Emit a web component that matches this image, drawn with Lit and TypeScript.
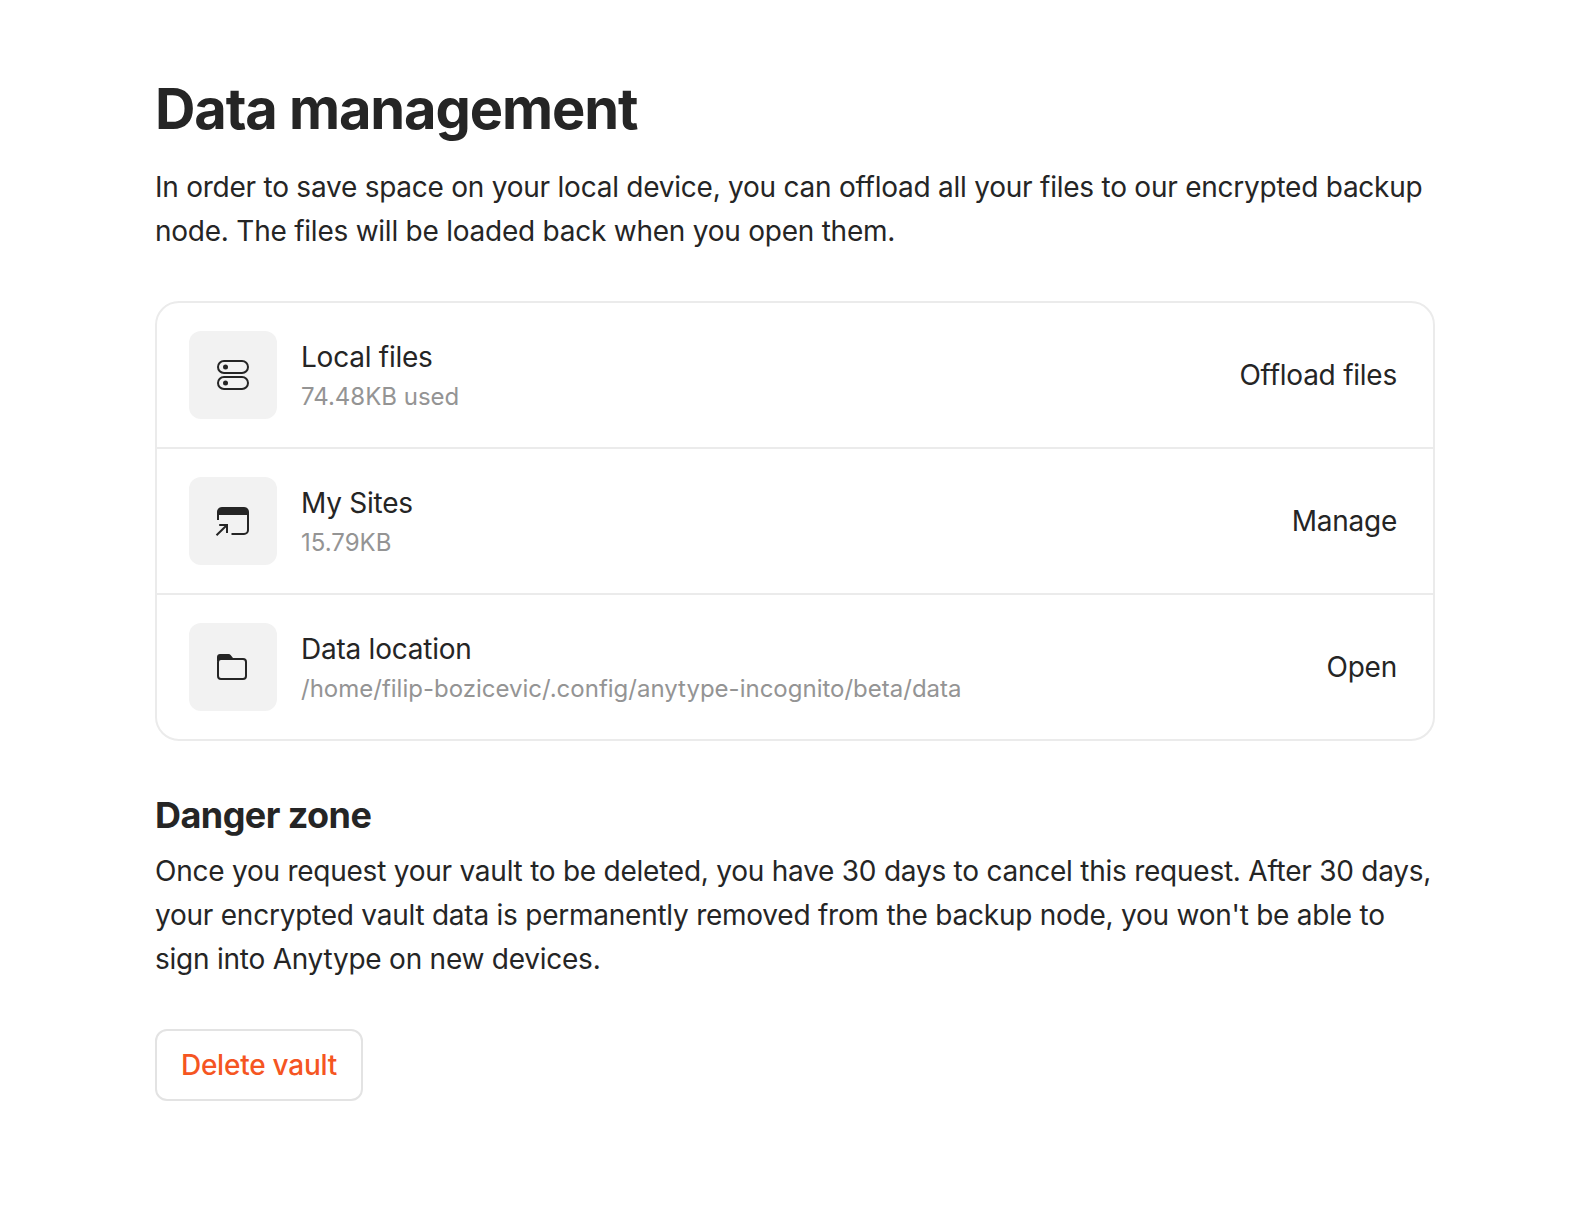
import { LitElement, html, css, svg } from "lit";
import { customElement } from "lit/decorators.js";

const serverIcon = svg`
  <g fill="none" stroke="#252525" stroke-width="2">
    <rect x="5" y="6" width="30" height="12" rx="6"/>
    <rect x="5" y="22" width="30" height="12" rx="6"/>
  </g>
  <circle cx="12.5" cy="12" r="2.5" fill="#252525"/>
  <circle cx="12.5" cy="28" r="2.5" fill="#252525"/>`;

const siteIcon = svg`
  <path d="M4 12.5V11C4 8.2 6.2 6 9 6H31C33.8 6 36 8.2 36 11V14H6V19H4Z" fill="#252525"/>
  <path d="M35 13V29C35 31.2 33.2 33 31 33H18.5" fill="none" stroke="#252525" stroke-width="2"/>
  <path d="M3.5 34.2L14 24M6.2 24H14V32" fill="none" stroke="#252525" stroke-width="2"/>`;

const folderIcon = svg`
  <path d="M4 14V10C4 8.3 5.3 7 7 7H15.5C16.5 7 17.2 7.4 17.8 8.2L20 11V13H6V14Z" fill="#252525"/>
  <rect x="5" y="12" width="28" height="20" rx="3" fill="none" stroke="#252525" stroke-width="2"/>`;

const rows = [
  { icon: serverIcon, name: "Local files", info: "74.48KB used", action: "Offload files" },
  { icon: siteIcon, name: "My Sites", info: "15.79KB", action: "Manage" },
  { icon: folderIcon, name: "Data location", info: "/home/filip-bozicevic/.config/anytype-incognito/beta/data", action: "Open" },
];

@customElement("app-root")
export class AppRoot extends LitElement {
  static styles = css`
    :host { display: block; box-sizing: border-box; min-height: 1214px; padding: 77px 146px 0 155px;
      background: #fff; color: #252525; font: 400 28px/44px Inter, sans-serif; letter-spacing: -0.24px; }
    h1, h2, p { margin: 0; }
    h1 { font-size: 56px; line-height: 64px; font-weight: 700; letter-spacing: -1.12px; margin-bottom: 24px; }
    h2 { font-size: 36px; line-height: 52px; font-weight: 700; letter-spacing: -0.56px; margin: 48px 0 8px; }
    .card { margin-top: 48px; border: 2px solid #ebebeb; border-radius: 24px; }
    .row { display: flex; align-items: center; gap: 24px; padding: 28px 36px 28px 32px; }
    .row + .row { border-top: 2px solid #ebebeb; }
    .icon { display: flex; align-items: center; justify-content: center; width: 88px; height: 88px;
      border-radius: 12px; background: #f2f2f2; flex: none; }
    .icon svg { width: 40px; height: 40px; display: block; }
    .text { flex: 1; }
    .info { font-size: 24px; line-height: 36px; letter-spacing: 0; color: #949494; }
    .delete { display: block; box-sizing: border-box; margin-top: 48px; width: 208px; height: 72px; padding: 0;
      border: 2px solid #e3e3e3; border-radius: 12px; background: #fff; color: #f55522; font: inherit;
      font-weight: 500; letter-spacing: -0.24px; text-align: center; }
  `;

  render() {
    return html`
      <h1>Data management</h1>
      <p>In order to save space on your local device, you can offload all your files to our encrypted backup node. The files will be loaded back when you open them.</p>
      <div class="card">
        ${rows.map((r) => html`
          <div class="row">
            <div class="icon"><svg viewBox="0 0 40 40">${r.icon}</svg></div>
            <div class="text">
              <div class="name">${r.name}</div>
              <div class="info">${r.info}</div>
            </div>
            <div class="action">${r.action}</div>
          </div>`)}
      </div>
      <h2>Danger zone</h2>
      <p>Once you request your vault to be deleted, you have 30 days to cancel this request. After 30 days, your encrypted vault data is permanently removed from the backup node, you won't be able to sign into Anytype on new devices.</p>
      <button class="delete">Delete vault</button>
    `;
  }
}
